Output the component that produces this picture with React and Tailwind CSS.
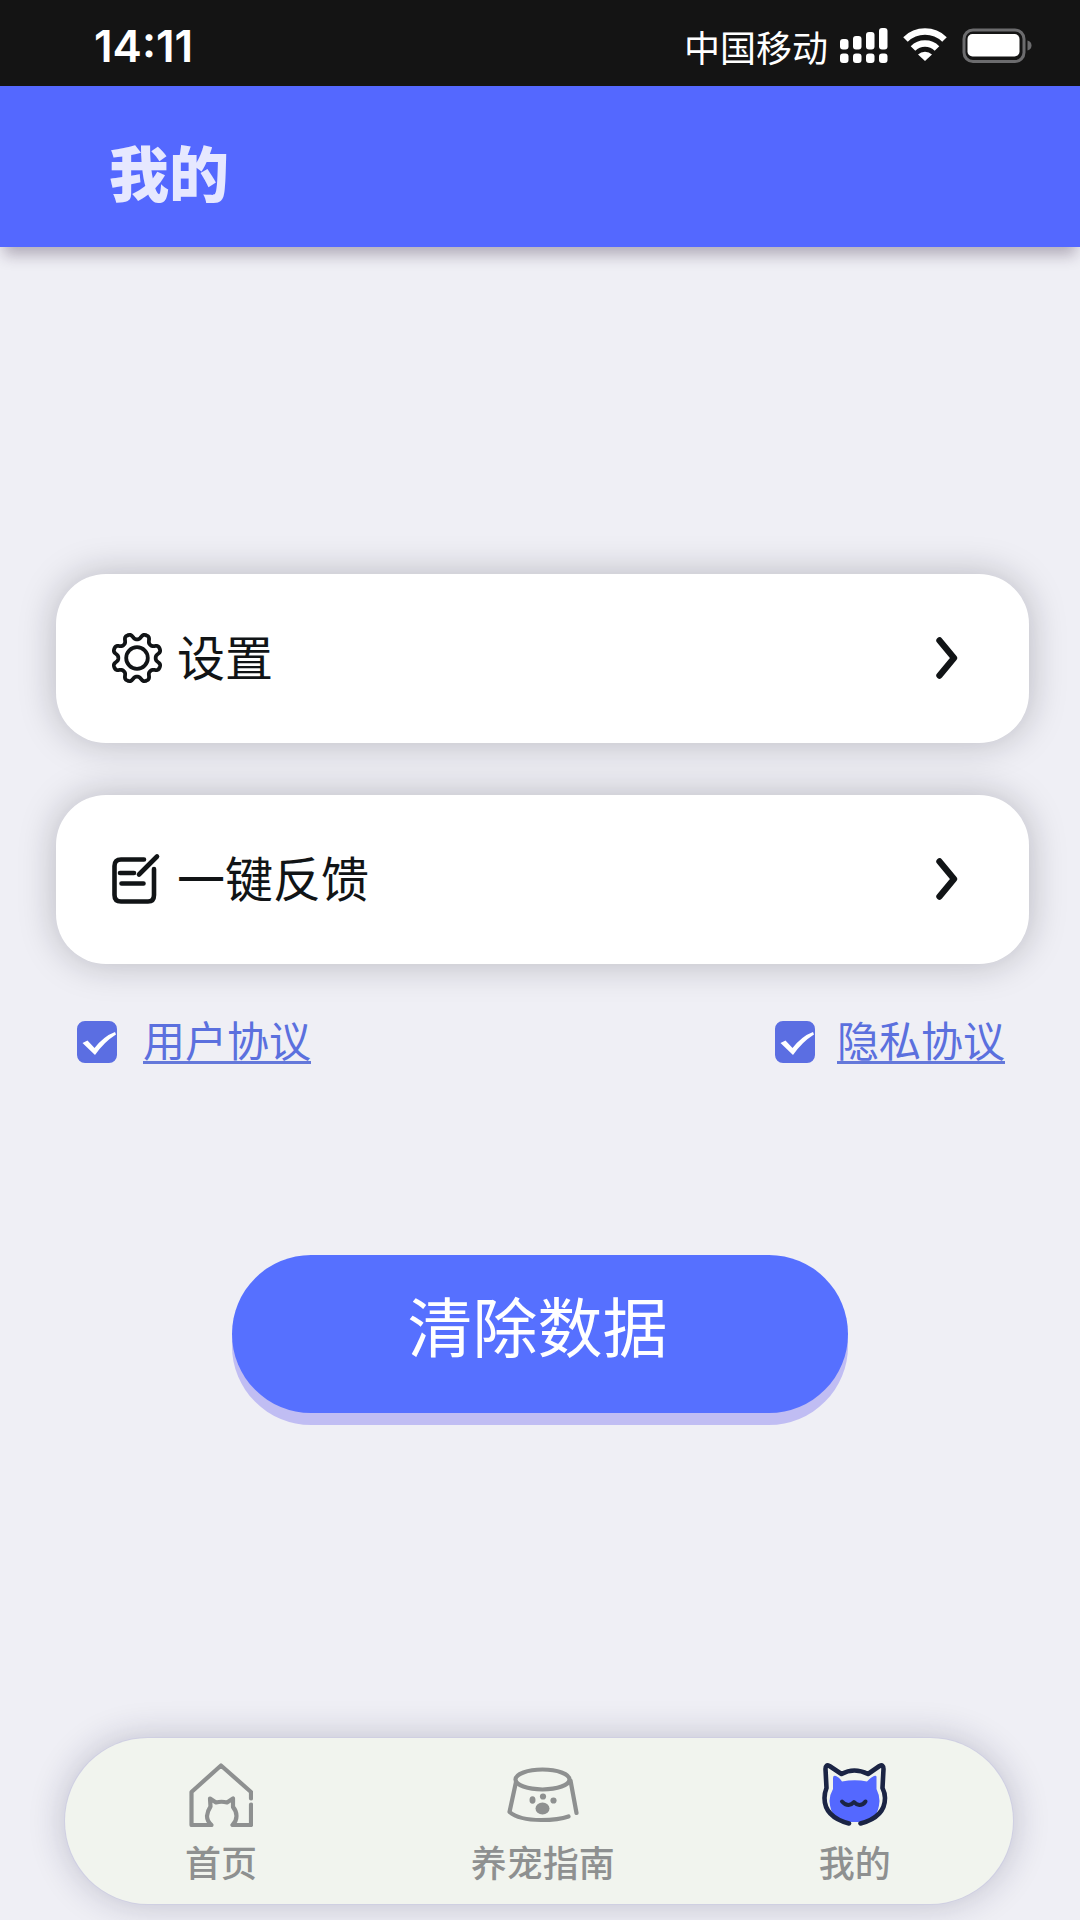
import { useState } from 'react';

const TEETH = 8;

// closed outline of a cog, centred on 26,26
function gearOutline() {
    const points = [];
    for (let i = 0; i < 240; i++) {
        const a = (i / 240) * Math.PI * 2;
        const r = 21.6 - 2.9 * (Math.tanh(1.6 * Math.cos(TEETH * a)) / Math.tanh(1.6));
        points.push(`${(26 + r * Math.sin(a)).toFixed(2)} ${(26 - r * Math.cos(a)).toFixed(2)}`);
    }
    return `M${points.join('L')}Z`;
}

const GEAR_PATH = gearOutline();

function GearIcon() {
    return (
        <svg viewBox="0 0 52 52" className="w-[52px] h-[52px]" fill="none" stroke="#111416" strokeWidth="3.8" strokeLinejoin="round">
            <path d={GEAR_PATH} />
            <circle cx="26" cy="26" r="10.8" />
        </svg>
    );
}

function NoteIcon() {
    return (
        <svg viewBox="0 0 52 52" className="w-[52px] h-[52px]" fill="none" stroke="#111416" strokeWidth="4.6" strokeLinecap="round" strokeLinejoin="round">
            <path d="M33 6.500H10Q3.500 6.500 3.500 13V42Q3.500 48.500 10 48.500H37Q43 48.500 43 42V16" />
            <path d="M46 3.500L28 21.500M9 20H23M10.500 30.500H32.500" />
        </svg>
    );
}

function ChevronIcon() {
    return (
        <svg viewBox="0 0 24 44" className="w-6 h-11" fill="none" stroke="#111416" strokeWidth="6.4" strokeLinecap="round" strokeLinejoin="round">
            <path d="M4.500 4.500L19 22L4.500 39.500" />
        </svg>
    );
}

function SignalIcon() {
    return (
        <svg viewBox="0 0 48 36" className="w-12 h-9" fill="white">
            <rect x="0" y="11" width="8.500" height="10.500" rx="3" />
            <rect x="13" y="8" width="8.500" height="13.500" rx="3" />
            <rect x="26" y="4" width="8.500" height="17.500" rx="3" />
            <rect x="39" y="0" width="8.500" height="21.500" rx="3" />
            {[0, 13, 26, 39].map(x => (
                <rect key={x} x={x} y="25.500" width="8.500" height="9.500" rx="3" />
            ))}
        </svg>
    );
}

function WifiIcon() {
    return (
        <svg viewBox="0 0 46 36" className="w-[46px] h-9" fill="none" stroke="white">
            <path d="M3.500 11.500A28 28 0 0 1 42.500 11.500" strokeWidth="6.500" />
            <path d="M11 20.500A17 17 0 0 1 35 20.500" strokeWidth="6.500" />
            <path d="M23 33L16 26.500A10 10 0 0 1 30 26.500Z" fill="white" stroke="none" />
        </svg>
    );
}

function BatteryIcon() {
    return (
        <svg viewBox="0 0 70 36" className="w-[70px] h-9" fill="none">
            <rect x="2" y="2" width="60" height="31.500" rx="9" stroke="#6c6c6e" strokeWidth="3" />
            <rect x="5.500" y="6" width="52" height="22.500" rx="5" fill="white" />
            <path d="M65.500 12.500Q69.500 13.500 69.500 17.500Q69.500 21.500 65.500 22.500Z" fill="#6c6c6e" />
        </svg>
    );
}

function HomeIcon() {
    return (
        <svg viewBox="0 0 64 64" className="w-16 h-16" fill="none" stroke="#8e9090" strokeWidth="4.2" strokeLinecap="round" strokeLinejoin="round">
            <path d="M62 35.500V29L32 2.500L2.500 29V62H22.500Q18 58 18 53Q18.500 48 21.500 43.500L21 35.500L27 39.500Q32.500 38 38 39.500L44 35.500V44Q47.500 48 47.500 53Q47.500 58 43.500 62H62V41.500" />
        </svg>
    );
}

function BowlIcon() {
    return (
        <svg viewBox="0 0 72 56" className="w-[72px] h-14" fill="none" stroke="#8e9090" strokeWidth="4.2" strokeLinecap="round" strokeLinejoin="round">
            <ellipse cx="35.500" cy="12.500" rx="27" ry="10" />
            <path d="M9 15L2.500 45Q12 53 34 53Q52 53 61.500 49.500M63.500 13.500L69.500 46" />
            <g fill="#8e9090" stroke="none">
                <ellipse cx="35.500" cy="41.500" rx="7" ry="6" />
                <ellipse cx="25.500" cy="33" rx="3" ry="3.800" />
                <circle cx="36" cy="29.500" r="3.100" />
                <circle cx="46.500" cy="33.500" r="3.100" />
            </g>
        </svg>
    );
}

function CatIcon() {
    return (
        <svg viewBox="0 0 66 64" className="w-[66px] h-16" fill="none" stroke="#1b2444" strokeWidth="4.6" strokeLinecap="round" strokeLinejoin="round">
            <path d="M11 15Q11 12 14 13Q18 15 20 18.500Q33 16 45 18.500Q48 15 52 13Q55 12 54.500 15V26Q57.500 32 57.500 38Q56 59 40 59H26Q9 59 7.500 38Q7.500 32 11 26Z" fill="#5468ff" stroke="none" />
            <path d="M27 60.500Q2.500 54 2.500 35Q2.500 30 4.500 25L3.500 6Q3.500 1 7.500 3L19.500 11Q32 4 46 11L57.500 3Q61.500 1 61.500 6L60.500 25Q63 30 63 35Q63 54 38.500 60.500" />
            <path d="M20 38.500Q23 42 26.500 42Q30 41.500 32 39Q34 41.500 37.500 42Q41 42 43.500 38.500" strokeWidth="4" />
        </svg>
    );
}

function MenuCard({ icon, label }) {
    return (
        <button type="button" className="flex items-center w-full h-[169px] pl-[55px] pr-[70px] pb-0.5 bg-white rounded-[50px] shadow-[0_0_36px_rgba(20,20,30,0.25)]">
            {icon}
            <span className="ml-3.5 pb-1.5 text-[48px] leading-[64px] text-[#111416]">{label}</span>
            <span className="ml-auto">
                <ChevronIcon />
            </span>
        </button>
    );
}

function Agreement({ id, label, gap }) {
    const [checked, setChecked] = useState(true);
    return (
        <div className={`flex items-center ${gap}`}>
            <span className="grid">
                <input
                    id={id}
                    type="checkbox"
                    checked={checked}
                    onChange={e => setChecked(e.target.checked)}
                    className="peer col-start-1 row-start-1 appearance-none w-10 h-[42px] rounded-lg border-2 border-[#5b6ee2] checked:bg-[#5b6ee2]"
                />
                <svg viewBox="0 0 40 42" className="hidden peer-checked:block col-start-1 row-start-1 w-10 h-[42px] pointer-events-none" fill="white">
                    <path d="M5.500 22L10.500 19.500L17.500 27Q27 15 38 11L39 13.500Q27 21 18 34Z" />
                </svg>
            </span>
            <label htmlFor={id} className="flex">
                <a href={`#${id}`} className="pb-0.5 border-b-3 border-[#6478da] text-[42px] leading-[40px] text-[#5b70de]">{label}</a>
            </label>
        </div>
    );
}

function NavItem({ icon, label, current }) {
    return (
        <a href="#" aria-current={current ? 'page' : undefined} className="flex flex-col items-center">
            <span className="flex items-center h-16">{icon}</span>
            <span className="mt-3 text-[36px] leading-[44px] font-medium text-[#8e9090]">{label}</span>
        </a>
    );
}

export default function App() {
    return (
        <div className="flex flex-col min-h-screen bg-[#efeff5] font-['Noto_Sans_CJK_SC',sans-serif]">
            <div className="flex items-center justify-between h-[86px] pt-1.5 pl-[94px] pr-12 bg-[#141414] text-white">
                <span className="font-['Inter',sans-serif] text-[44px] leading-[48px] font-semibold">14:11</span>
                <div className="flex items-center">
                    <span className="text-[36px] leading-[44px]">中国移动</span>
                    <div className="flex items-center gap-3.5 ml-3">
                        <SignalIcon />
                        <WifiIcon />
                        <BatteryIcon />
                    </div>
                </div>
            </div>

            <header className="flex items-center h-[161px] pl-[109px] pt-2 bg-[#5468ff] shadow-[0_12px_14px_-4px_rgba(40,20,50,0.3)]">
                <h1 className="text-[60px] leading-[72px] font-black text-[#e6e8ff]">我的</h1>
            </header>

            <main className="flex flex-col pl-14 pr-[51px] pt-[327px]">
                <div className="flex flex-col gap-[52px]">
                    <MenuCard icon={<GearIcon />} label="设置" />
                    <MenuCard icon={<NoteIcon />} label="一键反馈" />
                </div>

                <div className="flex items-center justify-between mt-[55px] pl-[21px] pr-6">
                    <Agreement id="terms" label="用户协议" gap="gap-[26px]" />
                    <Agreement id="privacy" label="隐私协议" gap="gap-[22px]" />
                </div>

                <button type="button" className="self-center w-[616px] h-[158px] mt-[191px] mb-20 mr-1.5 pb-5 pr-1 rounded-full bg-[#5670ff] shadow-[0_12px_0_#c0bdf3] text-[65px] leading-[80px] text-white">
                    清除数据
                </button>
            </main>

            <nav className="grid grid-cols-[16fr_17fr_15fr] h-[166px] mt-auto mb-4 ml-[65px] mr-[67px] pt-[25px] pr-3 rounded-full bg-[#f1f4ee] shadow-[0_0_0_1px_#cfcfe2,0_0_36px_rgba(30,30,70,0.24)]">
                <NavItem icon={<HomeIcon />} label="首页" />
                <NavItem icon={<BowlIcon />} label="养宠指南" />
                <NavItem icon={<CatIcon />} label="我的" current />
            </nav>
        </div>
    );
}
